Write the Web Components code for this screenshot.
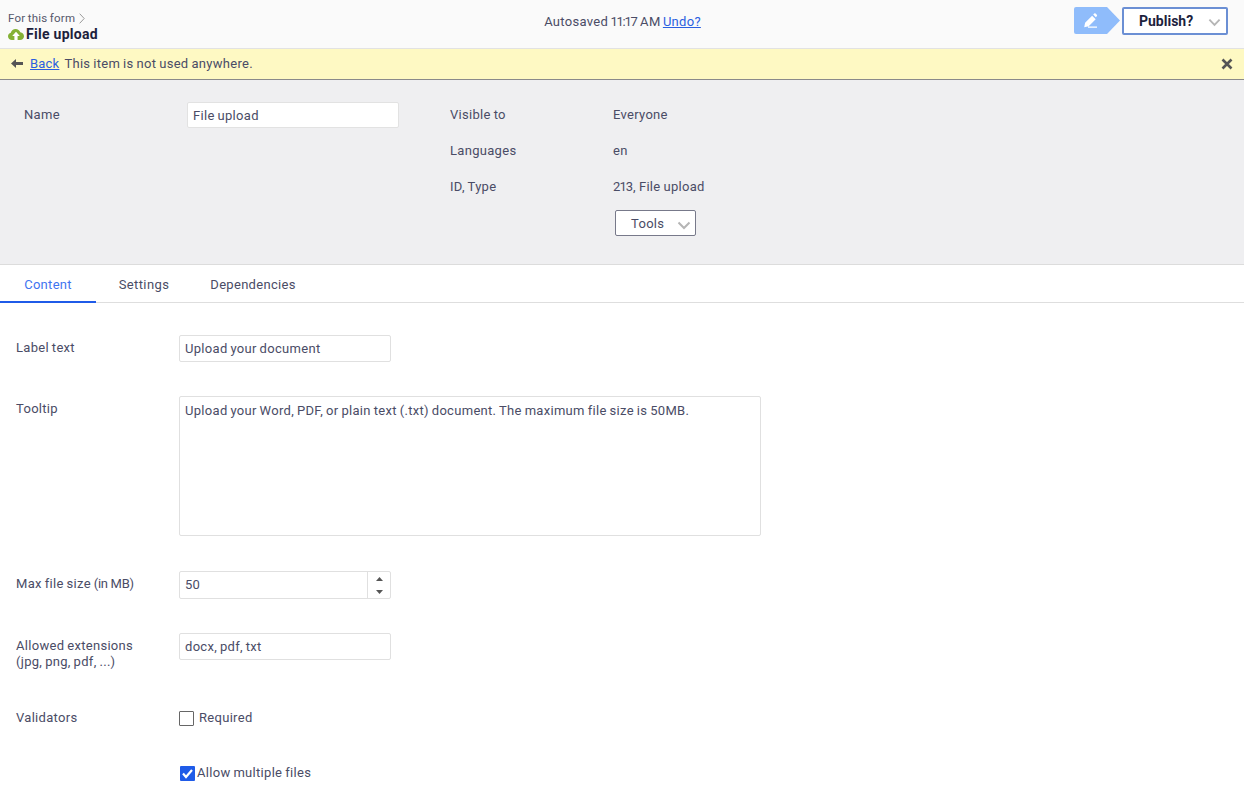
<!DOCTYPE html>
<html lang="en"><head><meta charset="utf-8"><title>File upload</title>
<style>
html,body{margin:0;padding:0;background:#fff;height:792px;overflow:hidden}
body{font-family:Roboto,"Liberation Sans",sans-serif;font-size:13px;color:#4a4c66;letter-spacing:.3px;word-spacing:-.6px}
</style></head><body>
<app-topbar></app-topbar>
<app-notice>This item is not used anywhere.</app-notice>
<app-summary></app-summary>
<app-tabs></app-tabs>
<app-form>
<form-row label="Label text" h="61"><text-field w="212" h="27">Upload your document</text-field></form-row>
<form-row label="Tooltip" h="175"><text-field w="582" h="140" multi>Upload your Word, PDF, or plain text (.txt) document. The maximum file size is 50MB.</text-field></form-row>
<form-row label="Max file size <span style='letter-spacing:-.3px;word-spacing:0'>(in MB)</span>" h="62"><number-field>50</number-field></form-row>
<form-row label="Allowed extensions<br>(jpg, png, pdf, ...)" h="77"><text-field w="212" h="27">docx, pdf, txt</text-field></form-row>
<form-row label="Validators" h="56" top="0"><check-box>Required</check-box></form-row>
<form-row label="" h="30"><check-box checked>Allow multiple files</check-box></form-row>
</app-form>
<script>
const base=':host{display:block;box-sizing:border-box}*{box-sizing:border-box}';
const chev='<svg width="14" height="9" viewBox="0 0 14 9"><path d="M1.500 1.500 7 7l5.500-5.500" fill="none" stroke="#b5b5b5" stroke-width="2"/></svg>';
class Comp extends HTMLElement{
  render(html){this.attachShadow({mode:'open'}).innerHTML=html}
}
customElements.define('app-topbar',class extends Comp{connectedCallback(){this.render(`<style>${base}
:host{height:49px;background:#fafafa;border-bottom:1px solid #e2e2e2;display:flex;align-items:flex-start;padding:12px 16px 0 8px}
.l,.r{flex:1}.c{padding-top:2px;line-height:16px;margin-left:9px;word-spacing:-1.200px}
.d{letter-spacing:-1.250px;margin-right:1.250px}
.crumb{font-size:11.500px;line-height:13px;color:#55576b;display:flex;align-items:center;gap:4px;letter-spacing:.2px}
.title{display:flex;align-items:center;gap:2px;font-weight:700;font-size:14px;line-height:16px;color:#1d1f3d;margin-top:1px;letter-spacing:.28px;word-spacing:0}
.r{display:flex;justify-content:flex-end;align-items:flex-start;margin-top:-5px;gap:2px}
.pub{width:106px;height:28px;background:#fff;border:2px solid #6b8fd4;border-radius:2px;display:flex;align-items:center;font-weight:700;color:#1d1f3d;font-size:14px;padding-left:15px;position:relative;letter-spacing:0}
.pub svg{position:absolute;right:5px;top:9px;width:13px}
a{color:#2b5fe0}
</style>
<div class="l"><div class="crumb">For this form <svg width="6" height="11" viewBox="0 0 6 11"><path d="M.7.7 5.200 5.500.7 10.300" fill="none" stroke="#9a9a9a"/></svg></div>
<div class="title"><svg width="16" height="12" viewBox="0 0 16 12"><path fill="#84b135" d="M4 12C1.700 12 0 10.400 0 8.300 0 6.500 1.200 5.200 2.800 4.800 3.300 2.600 5.300 1 7.600 1c2.200 0 4 1.300 4.700 3.300 2.100.2 3.700 1.800 3.700 3.900C16 10.300 14.300 12 12 12z"/><path fill="#fff" d="M8 3.800 11.800 8H9.600v4H6.400V8H4.200z"/></svg>File upload</div></div>
<div class="c">Autosaved <span class="d">11:17</span> AM <a href="#">Undo?</a></div>
<div class="r"><svg width="46" height="27" viewBox="0 0 46 27"><path fill="#8fbcfb" d="M2 0h31l13 13.500L33 27H2a2 2 0 0 1-2-2V2a2 2 0 0 1 2-2z"/><path fill="#fff" d="M10.200 20.200l.9-4.500 7-7 3.600 3.600-7 7zM19.200 7.600l1-1a1 1 0 0 1 1.400 0l1.200 1.200a1 1 0 0 1 0 1.400l-1 1zM14 19.600h9v1.200h-9z"/></svg>
<div class="pub">Publish?${chev}</div></div>`)}});
customElements.define('app-notice',class extends Comp{connectedCallback(){this.render(`<style>${base}
:host{height:31px;background:#fef9c3;border-bottom:1px solid #8a8a8a;display:flex;align-items:center;padding:0 11px 1px 11px}
a{color:#2b5fe0;margin:0 5px 0 6px;letter-spacing:.2px}.x{margin-left:auto;display:flex}
</style><svg width="13" height="9" viewBox="0 0 13 9"><path fill="#555" d="M0 4.500 5 0v3h7v3H5v3z"/></svg><a href="#">Back</a><slot></slot>
<span class="x"><svg width="12" height="12" viewBox="0 0 12 12"><path d="M1.500 1.500l9 9m0-9-9 9" stroke="#555" stroke-width="2.600" fill="none"/></svg></span>`)}});
customElements.define('app-summary',class extends Comp{connectedCallback(){this.render(`<style>${base}
:host{height:185px;background:#efeff1;border-bottom:1px solid #dcdcdc;display:flex;padding:22px 0 0 24px}
.a{width:163px;padding-top:5px;line-height:16px}.f{width:212px;height:26px;background:#fff;border:1px solid #e2e2e2;border-radius:2px;padding:0 5px;line-height:25px}
.g{margin-left:51px;display:grid;grid-template-columns:163px auto;grid-auto-rows:36px;line-height:16px;padding-top:5px}
.g div{height:36px}
.n{letter-spacing:-.9px;margin-right:.9px}
.g .tools{margin:-5px 0 0 2px;width:81px;height:26px;background:#fff;border:1px solid #77798a;border-radius:2px;display:flex;align-items:center;padding:1px 0 0 15px;position:relative;line-height:24px}
.tools svg{position:absolute;right:4px;top:10px}
</style><div class="a">Name</div><div class="f">File upload</div>
<div class="g"><div>Visible to</div><div>Everyone</div><div>Languages</div><div>en</div><div>ID, Type</div><div><span class="n">213</span>, File upload</div><div></div>
<div class="tools">Tools${chev}</div></div>`)}});
customElements.define('app-tabs',class extends Comp{connectedCallback(){this.render(`<style>${base}
:host{height:38px;border-bottom:1px solid #dedede;display:flex;background:#fff;word-spacing:0}
div{height:38px;line-height:39px;text-align:center}
.on{width:96px;color:#3f74f0;border-bottom:2px solid #1f5be8}.s{width:96px;letter-spacing:.38px}.d{width:118px;margin-left:2px}
</style><div class="on">Content</div><div class="s">Settings</div><div class="d">Dependencies</div>`)}});
customElements.define('app-form',class extends Comp{connectedCallback(){this.render(`<style>${base}
:host{padding:32px 0 0 16px}</style><slot></slot>`)}});
customElements.define('form-row',class extends Comp{connectedCallback(){const t=this.getAttribute('top')??5;this.render(`<style>${base}
:host{display:flex;height:${this.getAttribute('h')}px}
.l{width:163px;line-height:16px;padding-top:${t}px;font-size:13px}</style><div class="l">${this.getAttribute('label')}</div><slot></slot>`)}});
customElements.define('text-field',class extends Comp{connectedCallback(){const m=this.hasAttribute('multi');this.render(`<style>${base}
:host{width:${this.getAttribute('w')}px;height:${this.getAttribute('h')}px;background:#fff;border:1px solid #e0e0e0;border-radius:2px;padding:${m?'6px':'0'} 5px 0;line-height:${m?'16px':'25px'};overflow:hidden;white-space:nowrap}</style><slot></slot>`)}});
customElements.define('number-field',class extends Comp{connectedCallback(){this.render(`<style>${base}
:host{width:212px;height:28px;background:#fff;border:1px solid #e0e0e0;border-radius:2px;display:flex;line-height:26px}
.v{flex:1;padding-left:5px}.s{width:23px;border-left:1px solid #e0e0e0;display:flex;flex-direction:column;align-items:center;justify-content:center;gap:9px}
</style><div class="v"><slot></slot></div><div class="s"><svg width="7" height="4" viewBox="0 0 7 4"><path fill="#555" d="M3.500 0l3.500 4H0z"/></svg><svg width="7" height="4" viewBox="0 0 7 4"><path fill="#555" d="M0 0h7L3.500 4z"/></svg></div>`)}});
customElements.define('check-box',class extends Comp{connectedCallback(){const c=this.hasAttribute('checked');this.render(`<style>${base}
:host{display:flex;align-items:center;height:16px;margin-top:${c?'-1px':'0'};gap:${c?'2px':'5px'};line-height:16px}
.b{width:15px;height:15px;border:1px solid #666;border-radius:1px;background:#fff;display:flex}
.c{margin-left:1px;width:15px;height:15px;background:#1f5be8;border-radius:1px;display:flex}
</style><div class="${c?'c':'b'}">${c?'<svg width="15" height="15" viewBox="0 0 15 15"><path d="M3 7.500 6 11l6-7" fill="none" stroke="#fff" stroke-width="2.200"/></svg>':''}</div><slot></slot>`)}});
</script>
</body></html>
